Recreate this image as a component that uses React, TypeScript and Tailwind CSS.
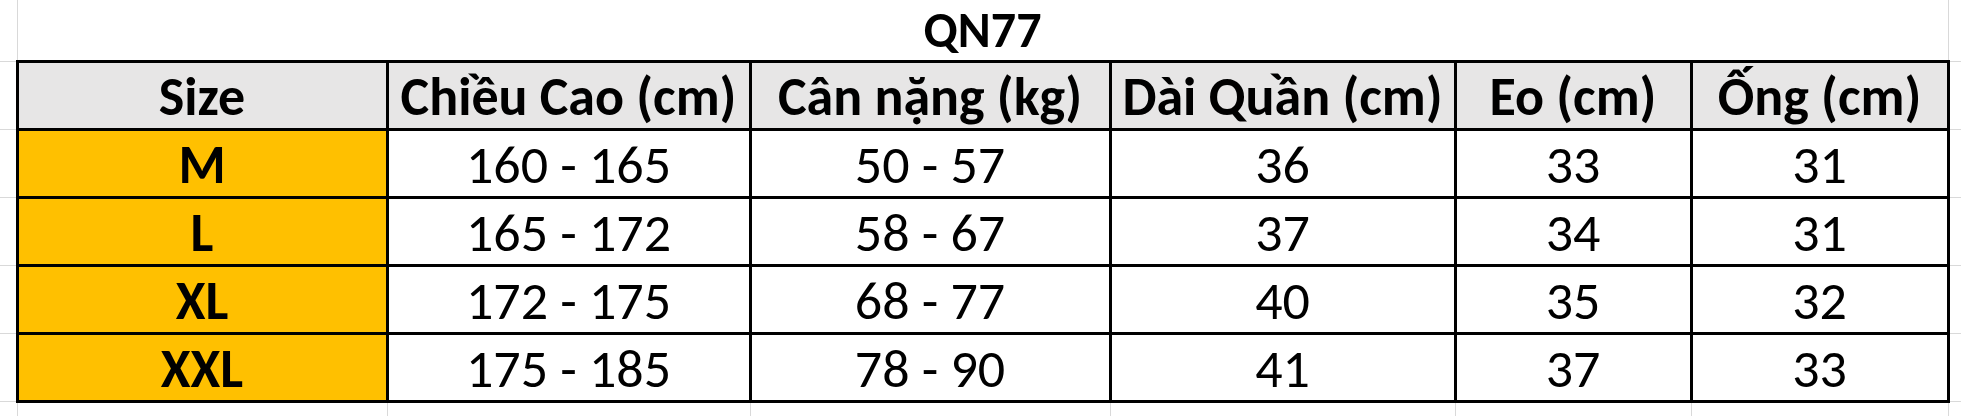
import React from 'react'

// Size chart for QN77, laid out like the spreadsheet it came from
const HEADERS = ['Size', 'Chiều Cao (cm)', 'Cân nặng (kg)', 'Dài Quần (cm)', 'Eo (cm)', 'Ống (cm)']

const ROWS = [
  ['M', '160 - 165', '50 - 57', '36', '33', '31'],
  ['L', '165 - 172', '58 - 67', '37', '34', '31'],
  ['XL', '172 - 175', '68 - 77', '40', '35', '32'],
  ['XXL', '175 - 185', '78 - 90', '41', '37', '33'],
]

const COL_WIDTHS = [17, 370, 363, 360, 345, 236, 257, 13]

const font = { fontFamily: 'Carlito, Calibri, Lato, "Liberation Sans", sans-serif' }

export default function App() {
  return (
    <div className="w-[1961px] h-[416px] overflow-hidden bg-white text-black" style={font}>
      <table className="border-collapse table-fixed w-[1961px]">
        <colgroup>
          {COL_WIDTHS.map((w, i) => (
            <col key={i} style={{ width: w }} />
          ))}
        </colgroup>
        <tbody>
          {/* Title row */}
          <tr className="h-[61px]">
            <td className="p-0 border-r border-b border-[#d9d9d9]" />
            <td colSpan={6} className="p-0 align-top text-center text-[50px] leading-[60px] font-bold border-b-[3px] border-black">
              QN77
            </td>
            <td className="p-0 border-l border-b border-[#d9d9d9]" />
          </tr>

          {/* Header */}
          <tr className="h-[68px]">
            <td className="p-0 border-b border-[#d9d9d9]" />
            {HEADERS.map((h) => (
              <td
                key={h}
                className="p-0 pt-[2px] text-center text-[54px] leading-[60px] font-bold bg-[#e7e6e6] border-[3px] border-black whitespace-nowrap"
              >
                {h}
              </td>
            ))}
            <td className="p-0 border-b border-[#d9d9d9]" />
          </tr>

          {/* Data rows */}
          {ROWS.map((row) => (
            <tr key={row[0]} className="h-[68px]">
              <td className="p-0 border-b border-[#d9d9d9]" />
              {row.map((v, i) => (
                <td
                  key={i}
                  className={
                    i === 0
                      ? 'p-0 pt-[2px] text-center text-[54px] leading-[60px] font-bold bg-[#ffc000] border-[3px] border-black'
                      : 'p-0 pt-[2px] text-center text-[54px] leading-[60px] border-[3px] border-black whitespace-nowrap'
                  }
                >
                  {v}
                </td>
              ))}
              <td className="p-0 border-b border-[#d9d9d9]" />
            </tr>
          ))}

          {/* Empty sheet row below the table */}
          <tr className="h-[15px]">
            {COL_WIDTHS.map((_, i) => (
              <td key={i} className={i < 7 ? 'p-0 border-r border-[#d9d9d9]' : 'p-0'} />
            ))}
          </tr>
        </tbody>
      </table>
    </div>
  )
}
